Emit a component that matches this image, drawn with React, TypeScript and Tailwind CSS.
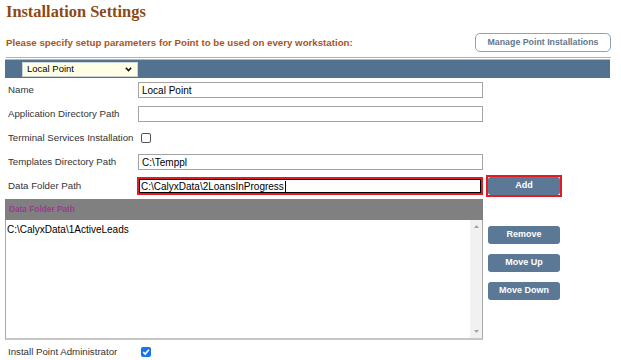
import { FC } from 'react';

const Field: FC<{ value?: string }> = ({ value }) => (
  <div className="flex h-[16px] w-[345px] items-center border border-[#a3a3a3] bg-white pl-[3px] text-[10px] text-black">
    {value}
  </div>
);

const Check: FC<{ checked?: boolean }> = ({ checked }) =>
  checked ? (
    <div className="ml-[3px] flex h-[10px] w-[10px] items-center justify-center rounded-[2px] bg-[#1a73e8]">
      <svg width="8" height="8" viewBox="0 0 8 8">
        <path d="M1.2 4.2 L3.2 6.1 L6.9 1.8" stroke="#fff" strokeWidth="1.6" fill="none" />
      </svg>
    </div>
  ) : (
    <div className="ml-[3px] h-[10px] w-[10px] rounded-[2px] border border-[#545454] bg-white"></div>
  );

const BlueButton: FC<{ label: string }> = ({ label }) => (
  <div className="flex h-[18px] w-[72px] items-center justify-center rounded-[3px] bg-[#5b7896] text-[9px] font-bold text-white">
    {label}
  </div>
);

const Row: FC<{ label: string; children: React.ReactNode }> = ({ label, children }) => (
  <div className="flex h-[24px] items-center">
    <div className="w-[133px] pl-[3px] text-[#333]">{label}</div>
    {children}
  </div>
);

const App: FC = () => {
  return (
    <div className="h-[360px] w-[621px] overflow-hidden bg-white font-['Liberation_Sans',Arial,sans-serif] text-[9.7px]">
      <h1 className="h-[24px] pl-[6px] font-['Liberation_Serif','Times_New_Roman',serif] text-[16.4px] leading-[24px] font-bold text-[#8b4a16]">
        Installation Settings
      </h1>

      <div className="mt-[4px] flex h-[29px] items-center justify-between pr-[10px] pl-[6px]">
        <p className="pt-[1px] font-bold text-[#a8561c]">
          Please specify setup parameters for Point to be used on every workstation:
        </p>
        <div className="flex h-[19px] w-[136px] items-center justify-center rounded-[5px] border border-[#8fa3b7] text-[8.8px] font-bold text-[#62788f]">
          Manage Point Installations
        </div>
      </div>

      <div className="ml-[6px] h-px w-[605px] bg-[#a9b4be]"></div>

      <div className="mt-[1px] ml-[5px] flex h-[19px] w-[605px] items-center border-t border-[#a9bccc] bg-[#52728f] pl-[17px]">
        <div className="flex h-[15px] w-[116px] items-center justify-between border border-[#c9d3da] bg-[#ffffe6] pr-[5px] pl-[4px] text-[9.5px] text-black">
          <span>Local Point</span>
          <svg width="7" height="5" viewBox="0 0 7 5">
            <path d="M0.8 0.8 L3.5 3.6 L6.2 0.8" stroke="#111" strokeWidth="1.6" fill="none" />
          </svg>
        </div>
      </div>

      <div className="pl-[5px]">
        <Row label="Name">
          <Field value="Local Point" />
        </Row>
        <Row label="Application Directory Path">
          <Field />
        </Row>
        <Row label="Terminal Services Installation">
          <Check />
        </Row>
        <Row label="Templates Directory Path">
          <Field value="C:\Temppl" />
        </Row>

        <div className="flex h-[24px] items-center">
          <div className="w-[132px] pl-[3px] text-[#333]">Data Folder Path</div>
          <div className="flex h-[18px] w-[346px] items-center border-2 border-[#e31b23] bg-white pl-[2px] text-[10px] text-black shadow-[inset_0_0_0_1px_#000]">
            <span>C:\CalyxData\2LoansInProgress</span>
            <span className="ml-px h-[11px] w-px bg-black"></span>
          </div>
          <div className="ml-[3px] h-[22px] w-[76px] border-2 border-[#e31b23]">
            <BlueButton label="Add" />
          </div>
        </div>

        <div className="mt-[1px] flex">
          <div className="w-[478px]">
            <div className="flex h-[21px] items-center bg-[#808080] pl-[4px] text-[8.3px] font-bold text-[#9b3a8f]">
              Data Folder Path
            </div>
            <div className="flex h-[120px] border-r border-b-2 border-l border-[#a8a8a8] border-b-[#c6c6c6]">
              <div className="flex-1 pt-[2px] pl-px text-[10px] text-black">C:\CalyxData\1ActiveLeads</div>
              <div className="flex w-[12px] flex-col items-center justify-between bg-[#f1f1f1] py-[5px]">
                <svg width="5" height="3" viewBox="0 0 5 3">
                  <path d="M0 3 L2.5 0 L5 3 Z" fill="#a3a3a3" />
                </svg>
                <svg width="5" height="3" viewBox="0 0 5 3">
                  <path d="M0 0 L2.5 3 L5 0 Z" fill="#a3a3a3" />
                </svg>
              </div>
            </div>
          </div>
          <div className="ml-[5px] flex flex-col gap-[10px] pt-[27px]">
            <BlueButton label="Remove" />
            <BlueButton label="Move Up" />
            <BlueButton label="Move Down" />
          </div>
        </div>

        <Row label="Install Point Administrator">
          <Check checked />
        </Row>
      </div>
    </div>
  );
};

export default App;
